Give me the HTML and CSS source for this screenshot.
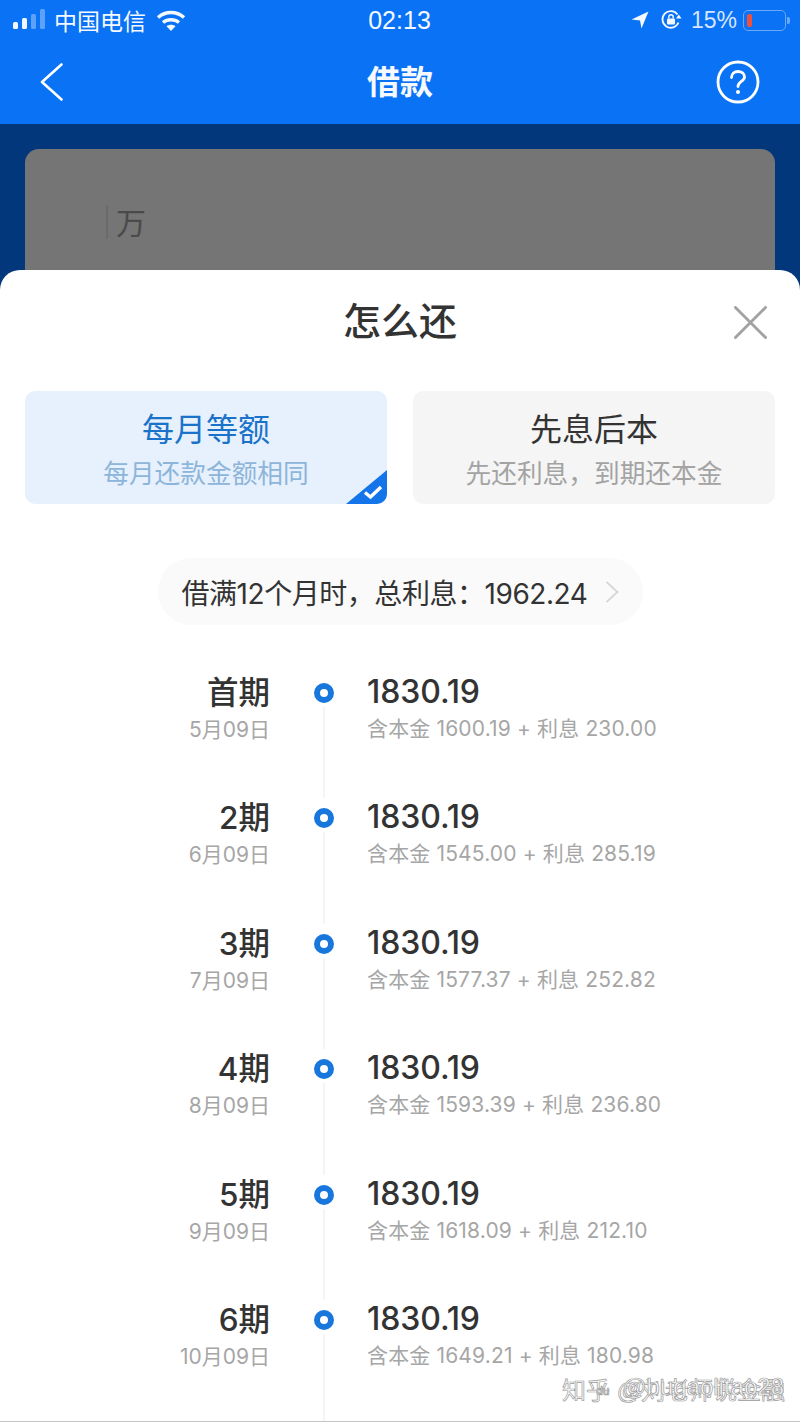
FILE: index.html
```html
<!DOCTYPE html>
<html lang="zh-CN">
<head>
    <meta charset="UTF-8">
    <meta name="viewport" content="width=device-width, initial-scale=1.0">
    <title>借款</title>
    <link rel="stylesheet" href="styles.css">
</head>
<body>
    <div class="page">
        <div class="topbar">
            <div class="status">
                <div class="status-left">
                    <svg class="signal" width="34" height="24" viewBox="0 0 34 24">
                        <rect x="1" y="14" width="5" height="7" rx="1.5" fill="#f2f8ff"/>
                        <rect x="10" y="10" width="5" height="11" rx="1.5" fill="#f2f8ff"/>
                        <rect x="19" y="6" width="5" height="15" rx="1.5" fill="#5da2f8"/>
                        <rect x="28" y="1" width="5" height="20" rx="1.5" fill="#5da2f8"/>
                    </svg>
                    <span class="carrier">中国电信</span>
                    <svg class="wifi" width="30" height="23" viewBox="0 0 30 23" fill="none" stroke="#f4f9ff" stroke-width="3.4">
                        <path d="M2 8.5C9.5 1.8 20.500 1.800 28 8.500"/>
                        <path d="M7 13.500C11.500 9.800 18.500 9.800 23 13.500"/>
                        <path d="M15 22L10.500 17.300C13 15.300 17 15.300 19.500 17.300Z" fill="#f4f9ff" stroke="none"/>
                    </svg>
                </div>
                <div class="clock">02:13</div>
                <div class="status-right">
                    <svg width="18" height="18" viewBox="0 0 18 18"><path d="M17.500 0.500L0.500 8.500L9 9.500L10.500 17.500Z" fill="#f4f9ff"/></svg>
                    <svg class="lock" width="22" height="22" viewBox="0 0 22 22" fill="none" stroke="#f4f9ff" stroke-width="1.800">
                        <path d="M18.500 13.500A8.300 8.300 0 1 1 17.500 5.500"/>
                        <path d="M16 9.500L21.500 9.500L18.800 5.500Z" fill="#f4f9ff" stroke="none"/>
                        <rect x="7" y="9.500" width="8" height="6" rx="1" fill="#f4f9ff" stroke="none"/>
                        <path d="M8.800 9.500V8A2.200 2.200 0 0 1 13.200 8V9.500" stroke-width="1.400"/>
                    </svg>
                    <span class="percent">15%</span>
                    <div class="battery"><div class="battery-level"></div></div>
                    <div class="battery-nub"></div>
                </div>
            </div>
            <div class="navbar">
                <svg width="24" height="38" viewBox="0 0 24 38" fill="none" stroke="#fff" stroke-width="2.600" stroke-linecap="round" stroke-linejoin="round"><path d="M21.500 1.500L2 19L21.500 36.500"/></svg>
                <div class="nav-title">借款</div>
                <svg width="44" height="44" viewBox="0 0 44 44" fill="none" stroke="#fff" stroke-width="2.800">
                    <circle cx="22" cy="22" r="20"/>
                    <path d="M15.500 17.500C15.500 13.500 18.500 11.500 22 11.500C25.500 11.500 28.500 13.500 28.500 17C28.500 21.500 22 21.500 22 26.500" stroke-linecap="round"/>
                    <circle cx="22" cy="32" r="2" fill="#fff" stroke="none"/>
                </svg>
            </div>
        </div>

        <div class="backdrop">
            <div class="amount-card">
                <span class="caret"></span>
                <span class="unit">万</span>
            </div>
        </div>

        <div class="sheet">
            <div class="sheet-head">
                <h1>怎么还</h1>
                <svg class="close" width="33" height="33" viewBox="0 0 34 34" stroke="#a2a2a2" stroke-width="3" stroke-linecap="round"><path d="M1.500 1.500L32.500 32.500M32.500 1.500L1.500 32.500"/></svg>
            </div>

            <div class="plans">
                <div class="plan plan-active">
                    <div class="plan-name">每月等额</div>
                    <div class="plan-desc">每月还款金额相同</div>
                    <div class="plan-tick">
                        <svg width="20" height="16" viewBox="0 0 20 16" fill="none" stroke="#fff" stroke-width="3.400"><path d="M2 8.500L7.500 13L18 3"/></svg>
                    </div>
                </div>
                <div class="plan">
                    <div class="plan-name">先息后本</div>
                    <div class="plan-desc">先还利息，到期还本金</div>
                </div>
            </div>

            <div class="total-wrap">
                <div class="total">
                    <span>借满12个月时，总利息：1962.24</span>
                    <svg width="14" height="22" viewBox="0 0 14 22" fill="none" stroke="#d6d6d6" stroke-width="1.800"><path d="M1.500 1L12.500 11L1.500 21"/></svg>
                </div>
            </div>

            <div class="schedule">
                <div class="row">
                    <div class="when"><div class="term">首期</div><div class="date">5月09日</div></div>
                    <div class="track"><div class="dot"></div><div class="line"></div></div>
                    <div class="what"><div class="money">1830.19</div><div class="split">含本金 1600.19 + 利息 230.00</div></div>
                </div>
                <div class="row">
                    <div class="when"><div class="term">2期</div><div class="date">6月09日</div></div>
                    <div class="track"><div class="dot"></div><div class="line"></div></div>
                    <div class="what"><div class="money">1830.19</div><div class="split">含本金 1545.00 + 利息 285.19</div></div>
                </div>
                <div class="row">
                    <div class="when"><div class="term">3期</div><div class="date">7月09日</div></div>
                    <div class="track"><div class="dot"></div><div class="line"></div></div>
                    <div class="what"><div class="money">1830.19</div><div class="split">含本金 1577.37 + 利息 252.82</div></div>
                </div>
                <div class="row">
                    <div class="when"><div class="term">4期</div><div class="date">8月09日</div></div>
                    <div class="track"><div class="dot"></div><div class="line"></div></div>
                    <div class="what"><div class="money">1830.19</div><div class="split">含本金 1593.39 + 利息 236.80</div></div>
                </div>
                <div class="row">
                    <div class="when"><div class="term">5期</div><div class="date">9月09日</div></div>
                    <div class="track"><div class="dot"></div><div class="line"></div></div>
                    <div class="what"><div class="money">1830.19</div><div class="split">含本金 1618.09 + 利息 212.10</div></div>
                </div>
                <div class="row">
                    <div class="when"><div class="term">6期</div><div class="date">10月09日</div></div>
                    <div class="track"><div class="dot"></div><div class="line"></div></div>
                    <div class="what"><div class="money">1830.19</div><div class="split">含本金 1649.21 + 利息 180.98</div></div>
                </div>
            </div>
        </div>

        <div class="watermark watermark-a">知乎 @刘老师说金融</div>
        <div class="watermark watermark-b"><span class="mark-du">du</span> @bugaolitao28</div>
    </div>
</body>
</html>
```

FILE: styles.css
```css
* {
    box-sizing: border-box;
}
body {
    margin: 0;
    font-family: "Liberation Sans", "Noto Sans CJK SC", sans-serif;
    background-color: #fff;
    color: #333;
}
.page {
    position: relative;
    width: 800px;
    height: 1422px;
    overflow: hidden;
    background-color: #03377b;
}

/* top blue bar */
.topbar {
    height: 124px;
    background-color: #0a72f5;
    color: #f4f9ff;
}
.status {
    display: grid;
    grid-template-columns: 1fr auto 1fr;
    align-items: center;
    height: 40px;
    padding: 0 10px 0 12px;
}
.status-left, .status-right {
    display: flex;
    align-items: center;
}
.status-right {
    justify-content: flex-end;
}
.carrier {
    margin: 0 10px 0 8px;
    font-size: 23px;
}
.clock {
    margin-left: -3px;
    font-size: 25px;
}
.lock {
    margin-left: 11px;
}
.percent {
    margin: 0 6px 0 9px;
    font-size: 23px;
    color: #d5e6fd;
}
.battery {
    width: 43px;
    height: 21px;
    padding: 3px;
    border: 1.5px solid #6aa8f8;
    border-radius: 5px;
}
.battery-level {
    width: 5px;
    height: 100%;
    background-color: #f1503c;
    border-radius: 2px;
}
.battery-nub {
    width: 3px;
    height: 7px;
    margin-left: 1px;
    background-color: #6aa8f8;
    border-radius: 0 2px 2px 0;
}
.navbar {
    display: grid;
    grid-template-columns: 1fr auto 1fr;
    align-items: center;
    height: 84px;
    padding: 0 40px;
}
.navbar svg:last-child {
    justify-self: end;
}
.nav-title {
    padding-bottom: 5px;
    font-size: 33px;
    font-weight: 700;
    color: #f6faff;
}

/* dimmed form behind the sheet */
.backdrop {
    padding: 25px 25px 0;
}
.amount-card {
    display: flex;
    align-items: center;
    height: 200px;
    padding: 0 0 54px 81px;
    background-color: #757575;
    border-radius: 14px;
}
.caret {
    width: 2px;
    height: 34px;
    margin-right: 8px;
    background-color: #6b6b6b;
}
.unit {
    padding-bottom: 3px;
    font-size: 30px;
    color: #4a4a4a;
}

/* bottom sheet */
.sheet {
    position: absolute;
    top: 270px;
    left: 0;
    right: 0;
    bottom: 0;
    overflow: hidden;
    padding: 0 25px;
    background-color: #fff;
    border-radius: 20px 20px 0 0;
    border-bottom: 1px solid #c4c4c4;
}
.sheet-head {
    position: relative;
    height: 121px;
    padding-top: 26px;
    text-align: center;
}
.sheet-head h1 {
    margin: 0;
    font-size: 38px;
    line-height: 52px;
    font-weight: 500;
    color: #333;
}
.close {
    position: absolute;
    top: 36px;
    right: 8px;
}
.plans {
    display: grid;
    grid-template-columns: 1fr 1fr;
    gap: 26px;
}
.plan {
    position: relative;
    height: 113px;
    overflow: hidden;
    padding-top: 17px;
    text-align: center;
    background-color: #f5f5f5;
    border-radius: 10px;
}
.plan-name {
    font-size: 32px;
    line-height: 44px;
    color: #333;
}
.plan-desc {
    margin-top: 4px;
    font-size: 25.700px;
    line-height: 36px;
    color: #a3a3a3;
}
.plan-active {
    background-color: #e6f1fd;
}
.plan-active .plan-name {
    color: #1a73c9;
}
.plan-active .plan-desc {
    color: #8db5da;
}
.plan-tick {
    position: absolute;
    right: 0;
    bottom: 0;
    width: 41px;
    height: 34px;
    background-color: #1475ea;
    clip-path: polygon(100% 0, 100% 100%, 0 100%);
}
.plan-tick svg {
    position: absolute;
    right: 4px;
    bottom: 4px;
}
.total-wrap {
    display: flex;
    justify-content: center;
    margin-top: 54px;
}
.total {
    display: flex;
    align-items: center;
    gap: 18px;
    width: 485px;
    height: 67px;
    padding-left: 24px;
    font-family: Inter, "Noto Sans CJK SC", sans-serif;
    font-size: 28px;
    letter-spacing: -0.45px;
    color: #333;
    background-color: #fafafa;
    border-radius: 34px;
}

/* repayment timeline */
.schedule {
    margin-top: 48px;
}
.row {
    display: grid;
    grid-template-columns: 245px 20px 1fr;
    column-gap: 44px;
    height: 125.400px;
    font-family: Inter, "Noto Sans CJK SC", sans-serif;
}
.row .what {
    margin-left: -11px;
}
.when {
    text-align: right;
}
.term {
    font-size: 31.500px;
    line-height: 40px;
    font-weight: 500;
    color: #333;
}
.date, .split {
    margin-top: 2px;
    font-size: 21px;
    line-height: 30px;
    color: #a6a6a6;
}
.split {
    letter-spacing: 0.15px;
}
.track {
    display: flex;
    flex-direction: column;
    align-items: center;
    padding-top: 10px;
}
.dot {
    flex: none;
    width: 20px;
    height: 20px;
    background-color: #fff;
    border: 6px solid #1877dc;
    border-radius: 50%;
}
.line {
    flex: 1;
    width: 2px;
    margin-top: 4px;
    background-color: #f5f5f5;
}
.money {
    margin: -1px 0 1px;
    font-size: 32px;
    line-height: 40px;
    font-weight: 500;
    letter-spacing: -0.1px;
    color: #333;
}

/* outlined site watermarks over the corner */
.watermark {
    position: absolute;
    right: 15px;
    bottom: 17px;
    font-size: 24px;
    line-height: 28px;
    color: #fff;
    -webkit-text-stroke: 0.7px #9a9a9a;
    white-space: nowrap;
}
.watermark-b {
    right: 16px;
}
.mark-du {
    margin-right: 6px;
    font-size: 12px;
}
```
